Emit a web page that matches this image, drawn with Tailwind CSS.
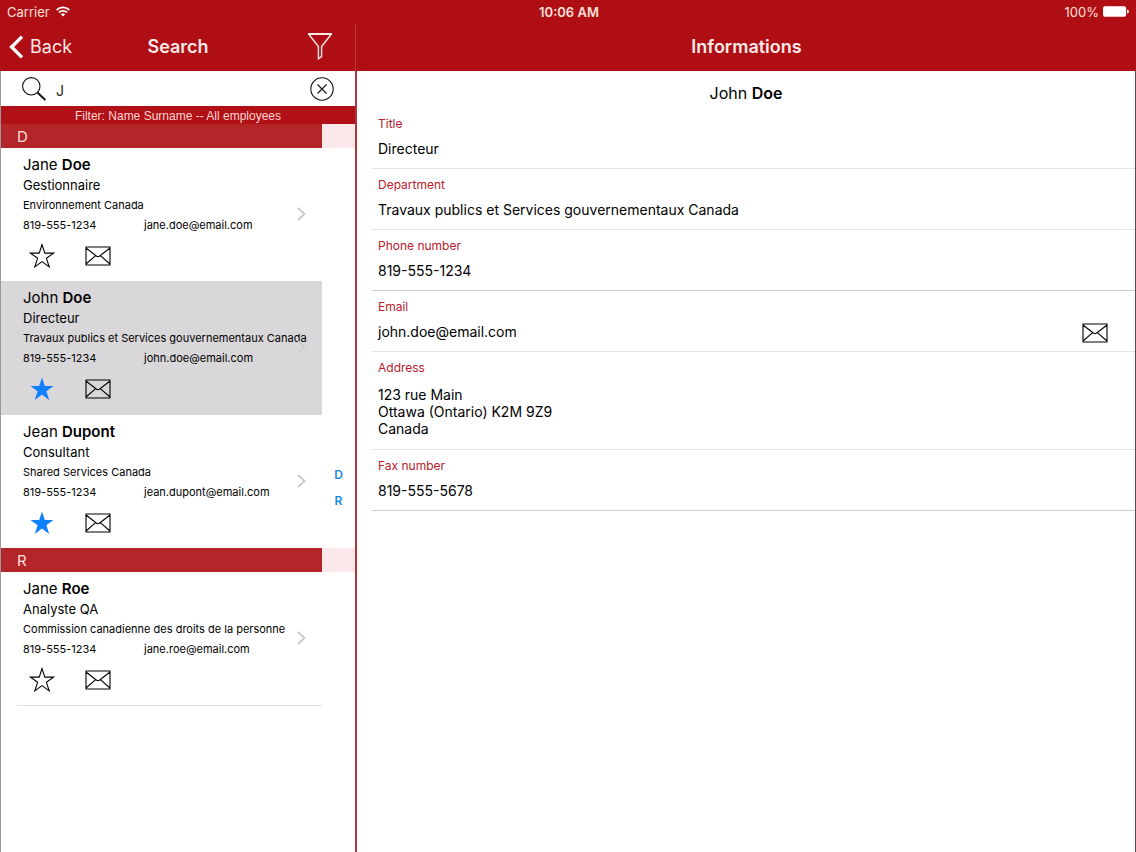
<!DOCTYPE html>
<html lang="en">
<head>
    <meta charset="UTF-8">
    <meta name="viewport" content="width=device-width, initial-scale=1.0">
    <title>Employee Directory</title>
    <script src="https://cdn.jsdelivr.net/npm/@tailwindcss/browser@4"></script>
</head>
<body class="min-h-screen flex flex-col bg-white text-black font-['Inter','Liberation_Sans',sans-serif]">

    <!-- Icons -->
    <svg class="hidden" xmlns="http://www.w3.org/2000/svg">
        <symbol id="star" viewBox="0 0 26 26"><path d="M13 1.6l2.8 8.5h8.7l-7.1 5.2 2.8 8.6-7.2-5.3-7.2 5.3 2.8-8.6-7.1-5.2h8.7z" stroke-width="1.1" stroke-linejoin="miter"/></symbol>
        <symbol id="mail" viewBox="0 0 26 20"><path d="M1 1h24v18H1zM1 2l10.6 8.2q1.4 1.2 2.8 0L25 2M1 18l9.4-8.2M25 18l-9.4-8.2" fill="none" stroke="currentColor" stroke-width="1.1"/></symbol>
        <symbol id="chevron" viewBox="0 0 9 14"><path d="M1 1l6.5 6L1 13" fill="none" stroke="currentColor" stroke-width="1.8"/></symbol>
    </svg>

    <!-- Status bar -->
    <header class="grid grid-cols-[1fr_auto_1fr] items-center h-[23px] pl-[9px] pr-[7px] bg-[#af0e14] text-[#fde0dc] text-[13px] leading-4">
        <div class="flex items-center gap-1.5 -ml-0.5">
            <span>Carrier</span>
            <svg class="w-[14px] h-[11px]" viewBox="0 0 14 11" fill="none" stroke="#fff" stroke-width="1.8">
                <path d="M.7 4a9 9 0 0 1 12.6 0M3 6.5a5.8 5.8 0 0 1 8 0"/>
                <path d="M7 10.6L4.9 8.4a3 3 0 0 1 4.2 0z" fill="#fff" stroke="none"/>
            </svg>
        </div>
        <span class="text-center font-semibold">10:06 AM</span>
        <div class="flex items-center justify-end gap-1">
            <span>100%</span>
            <svg class="w-[26px] h-[11px]" viewBox="0 0 27 11" fill="#fff">
                <rect width="24" height="11" rx="2"/>
                <path d="M25 3.5q2 .5 2 2t-2 2z"/>
            </svg>
        </div>
    </header>

    <div class="flex flex-1">

        <!-- Search results -->
        <aside class="w-[357px] shrink-0 flex flex-col">
            <div class="pr-px bg-[#af0e14]">
                <div class="grid grid-cols-3 items-center h-12 pl-2 pr-[23px] text-[#fdeae8] text-lg leading-6 border-r border-[#bd3338]">
                    <button type="button" class="flex items-center gap-1.5 justify-self-start">
                        <svg class="w-4 h-6" viewBox="0 0 16 24" fill="none" stroke="#fff" stroke-width="3.4"><path d="M14 1.6L3.6 12 14 22.4"/></svg>
                        Back
                    </button>
                    <h1 class="pl-4 text-center font-semibold">Search</h1>
                    <button type="button" aria-label="Filter" class="justify-self-end">
                        <svg class="w-6 h-7" viewBox="0 0 24 28" fill="none" stroke="#fdeae8" stroke-width="1.4"><path d="M0 1h24" stroke-width="2"/><path d="M1 1.5l9.4 12v12.2l3.2-2v-10.2L23 1.5"/></svg>
                    </button>
                </div>
            </div>

            <div class="flex-1 flex flex-col border-l border-l-[#999] border-r-2 border-r-[#a9383c]">
                <div class="flex items-center h-[35px] pl-[21px] pr-[21px]">
                    <label for="q" aria-label="Search">
                        <svg class="w-6 h-6" viewBox="0 0 24 24" fill="none" stroke="#111"><circle cx="9.3" cy="9.3" r="8.7" stroke-width="1.1"/><path d="M15.4 15.4L23.4 23" stroke-width="2"/></svg>
                    </label>
                    <input id="q" type="text" value="J" class="flex-1 min-w-0 pl-2.5 pt-1 text-sm leading-5 text-[#222] outline-none">
                    <button type="button" aria-label="Clear">
                        <svg class="w-6 h-6" viewBox="0 0 24 24" fill="none" stroke="#111" stroke-width="1.1"><circle cx="12" cy="12" r="11.2"/><path d="M7.5 7.5l9 9M16.5 7.5l-9 9"/></svg>
                    </button>
                </div>
                <p class="h-[18px] bg-[#b01016] text-[#fdd5d2] text-center text-xs leading-5 font-['Liberation_Sans',Arial,sans-serif]">Filter: Name Surname -- All employees</p>

                <div class="relative flex-1">
                    <div class="pr-[33px] bg-[#fbe8ea]"><h2 id="D" class="h-6 pl-4 bg-[#b4252a] text-[#fde0dc] text-[15px] leading-[26px]">D</h2></div>

                    <article class="relative mr-[33px] h-[133px] pl-[22px] pt-[7px]">
                        <h3 class="text-[15px] leading-5">Jane <b class="font-semibold">Doe</b></h3>
                        <p class="text-[13px] leading-5">Gestionnaire</p>
                        <p class="text-[11px] leading-5 whitespace-nowrap">Environnement Canada</p>
                        <p class="flex text-[11px] leading-5"><span class="w-[121px]">819-555-1234</span><span>jane.doe@email.com</span></p>
                        <div class="flex items-center gap-[30px] pl-1.5 mt-2">
                            <button type="button" aria-label="Add to favourites"><svg class="w-[26px] h-[26px] fill-none stroke-black"><use href="#star"/></svg></button>
                            <button type="button" aria-label="Send email"><svg class="w-[26px] h-5"><use href="#mail"/></svg></button>
                        </div>
                        <svg class="absolute right-4 top-[59px] w-[9px] h-[14px] text-[#c7c7cc]"><use href="#chevron"/></svg>
                    </article>

                    <article class="relative mr-[33px] h-[134px] pl-[22px] pt-[7px] bg-[#d9d7d9]">
                        <h3 class="text-[15px] leading-5">John <b class="font-semibold">Doe</b></h3>
                        <p class="text-[13px] leading-5">Directeur</p>
                        <p class="text-[11px] leading-5 whitespace-nowrap">Travaux publics et Services gouvernementaux Canada</p>
                        <p class="flex text-[11px] leading-5"><span class="w-[121px]">819-555-1234</span><span>john.doe@email.com</span></p>
                        <div class="flex items-center gap-[30px] pl-1.5 mt-2">
                            <button type="button" aria-label="Remove from favourites"><svg class="w-[26px] h-[26px] fill-[#0f80ff]"><use href="#star"/></svg></button>
                            <button type="button" aria-label="Send email"><svg class="w-[26px] h-5"><use href="#mail"/></svg></button>
                        </div>
                        <svg class="absolute right-4 top-[59px] w-[9px] h-[14px] text-[#cdcbcf]"><use href="#chevron"/></svg>
                    </article>

                    <article class="relative mr-[33px] h-[133px] pl-[22px] pt-[7px]">
                        <h3 class="text-[15px] leading-5">Jean <b class="font-semibold">Dupont</b></h3>
                        <p class="text-[13px] leading-5">Consultant</p>
                        <p class="text-[11px] leading-5 whitespace-nowrap">Shared Services Canada</p>
                        <p class="flex text-[11px] leading-5"><span class="w-[121px]">819-555-1234</span><span>jean.dupont@email.com</span></p>
                        <div class="flex items-center gap-[30px] pl-1.5 mt-2">
                            <button type="button" aria-label="Remove from favourites"><svg class="w-[26px] h-[26px] fill-[#0f80ff]"><use href="#star"/></svg></button>
                            <button type="button" aria-label="Send email"><svg class="w-[26px] h-5"><use href="#mail"/></svg></button>
                        </div>
                        <svg class="absolute right-4 top-[59px] w-[9px] h-[14px] text-[#c7c7cc]"><use href="#chevron"/></svg>
                    </article>

                    <div class="pr-[33px] bg-[#fbe8ea]"><h2 id="R" class="h-6 pl-4 bg-[#b4252a] text-[#fde0dc] text-[15px] leading-[26px]">R</h2></div>

                    <article class="relative mr-[33px] h-[133px] pl-[22px] pt-[7px]">
                        <h3 class="text-[15px] leading-5">Jane <b class="font-semibold">Roe</b></h3>
                        <p class="text-[13px] leading-5">Analyste QA</p>
                        <p class="text-[11px] leading-5 whitespace-nowrap">Commission canadienne des droits de la personne</p>
                        <p class="flex text-[11px] leading-5"><span class="w-[121px]">819-555-1234</span><span>jane.roe@email.com</span></p>
                        <div class="flex items-center gap-[30px] pl-1.5 mt-2">
                            <button type="button" aria-label="Add to favourites"><svg class="w-[26px] h-[26px] fill-none stroke-black"><use href="#star"/></svg></button>
                            <button type="button" aria-label="Send email"><svg class="w-[26px] h-5"><use href="#mail"/></svg></button>
                        </div>
                        <svg class="absolute right-4 top-[59px] w-[9px] h-[14px] text-[#c7c7cc]"><use href="#chevron"/></svg>
                    </article>
                    <hr class="ml-4 mr-[33px] border-[#e2e2e4]">

                    <!-- Letter index -->
                    <nav class="absolute inset-y-0 right-0 w-[33px] flex flex-col items-center justify-center gap-2.5 text-xs leading-4 font-semibold text-[#1a86e8]">
                        <a href="#D">D</a>
                        <a href="#R">R</a>
                    </nav>
                </div>
            </div>
        </aside>

        <!-- Employee details -->
        <main class="flex-1 flex flex-col">
            <h1 class="h-12 bg-[#af0e14] text-[#fdeae8] text-center text-lg leading-[48px] font-semibold">Informations</h1>
            <div class="flex-1 border-r border-[#6b4450]">
                <h2 class="h-[37px] pt-2.5 text-center text-base leading-6">John <b class="font-semibold">Doe</b></h2>
                <dl class="ml-[15px] text-sm leading-[17px]">
                    <div class="pl-1.5 pt-2 pb-[11px] border-b border-[#e4e4e8]">
                        <dt class="text-xs leading-4 text-[#b8202c]">Title</dt>
                        <dd class="mt-2">Directeur</dd>
                    </div>
                    <div class="pl-1.5 pt-2 pb-[11px] border-b border-[#e4e4e8]">
                        <dt class="text-xs leading-4 text-[#b8202c]">Department</dt>
                        <dd class="mt-2">Travaux publics et Services gouvernementaux Canada</dd>
                    </div>
                    <div class="pl-1.5 pt-2 pb-[11px] border-b border-[#cacace]">
                        <dt class="text-xs leading-4 text-[#b8202c]">Phone number</dt>
                        <dd class="mt-2">819-555-1234</dd>
                    </div>
                    <div class="relative pl-1.5 pt-2 pb-[11px] border-b border-[#e4e4e8]">
                        <dt class="text-xs leading-4 text-[#b8202c]">Email</dt>
                        <dd class="mt-2">john.doe@email.com
                            <button type="button" aria-label="Send email" class="absolute right-[27px] bottom-2"><svg class="w-[26px] h-5"><use href="#mail"/></svg></button>
                        </dd>
                    </div>
                    <div class="pl-1.5 pt-2 pb-3 border-b border-[#e4e4e8]">
                        <dt class="text-xs leading-4 text-[#b8202c]">Address</dt>
                        <dd class="mt-2.5">123 rue Main<br>Ottawa (Ontario) K2M 9Z9<br>Canada</dd>
                    </div>
                    <div class="pl-1.5 pt-2 pb-[11px] border-b border-[#cacace]">
                        <dt class="text-xs leading-4 text-[#b8202c]">Fax number</dt>
                        <dd class="mt-2">819-555-5678</dd>
                    </div>
                </dl>
            </div>
        </main>
    </div>

</body>
</html>
